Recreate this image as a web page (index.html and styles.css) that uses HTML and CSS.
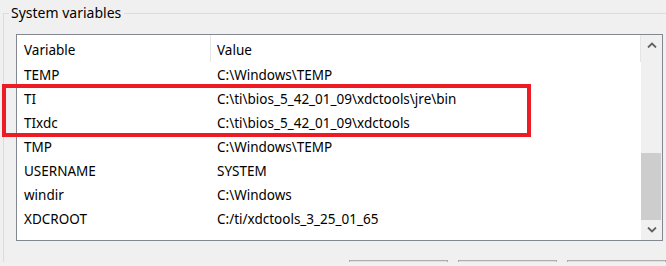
FILE: index.html
```html
<!DOCTYPE html>
<html>
<head>
<meta charset="utf-8">
<link rel="stylesheet" href="styles.css">
</head>
<body>
<fieldset class="group">
  <legend class="group-title">System variables</legend>
  <div class="listbox">
    <div class="list">
      <div class="row head">
        <div class="cell c1">Variable</div>
        <div class="cell c2">Value</div>
      </div>
      <div class="row"><div class="cell c1">TEMP</div><div class="cell">C:\Windows\TEMP</div></div>
      <div class="row"><div class="cell c1">TI</div><div class="cell">C:\ti\bios_5_42_01_09\xdctools\jre\bin</div></div>
      <div class="row"><div class="cell c1">TIxdc</div><div class="cell">C:\ti\bios_5_42_01_09\xdctools</div></div>
      <div class="row"><div class="cell c1">TMP</div><div class="cell">C:\Windows\TEMP</div></div>
      <div class="row"><div class="cell c1">USERNAME</div><div class="cell">SYSTEM</div></div>
      <div class="row"><div class="cell c1">windir</div><div class="cell">C:\Windows</div></div>
      <div class="row"><div class="cell c1">XDCROOT</div><div class="cell">C:/ti/xdctools_3_25_01_65</div></div>
    </div>
    <div class="scrollbar">
      <div class="arrow">
        <svg width="10" height="6" viewBox="0 0 10 6"><path d="M1 5.5 L5 1.5 L9 5.5" fill="none" stroke="#606060" stroke-width="1.8"/></svg>
      </div>
      <div class="track"><div class="thumb"></div></div>
      <div class="arrow">
        <svg width="10" height="6" viewBox="0 0 10 6"><path d="M1 0.5 L5 4.5 L9 0.5" fill="none" stroke="#606060" stroke-width="1.8"/></svg>
      </div>
    </div>
  </div>
  <div class="buttons">
    <div class="btn"></div>
    <div class="btn"></div>
    <div class="btn"></div>
  </div>
</fieldset>
<div class="highlight"></div>
</body>
</html>
```

FILE: styles.css
```css
html, body {
  margin: 0;
  padding: 0;
  background: #f0f0f0;
  overflow: hidden;
  width: 666px;
  height: 266px;
}
body {
  position: relative;
  font-family: "Noto Sans", "Open Sans", sans-serif;
  font-size: 13.5px;
  color: #000;
}
.group {
  margin: 3px 0 0 3px;
  padding: 11px 0 0 0;
  border: 1px solid #dcdcdc;
  border-right: none;
  border-bottom: none;
  width: 663px;
  height: 259px;
  box-sizing: border-box;
  overflow: hidden;
}
.group-title {
  padding: 0 3px 0 2px;
  margin-left: 5px;
  line-height: 20px;
  font-size: 14px;
}
.listbox {
  margin-left: 12px;
  width: 647px;
  height: 207px;
  box-sizing: border-box;
  border: 1px solid #828790;
  background: #fff;
  display: flex;
}
.list {
  flex: 1;
  display: flex;
  flex-direction: column;
}
.row {
  display: grid;
  grid-template-columns: 194px 1fr;
  height: 24px;
}
.row.head {
  height: 27px;
}
.cell {
  padding: 2px 0 0 7px;
  white-space: nowrap;
  line-height: 22px;
}
.row .cell + .cell {
  padding-left: 6px;
}
.head .cell {
  padding-top: 3px;
  line-height: 24px;
}
.head .c1, .head .c2 {
  border-right: 1px solid #e5e5e5;
}
.scrollbar {
  width: 21px;
  background: #f0f0f0;
  display: flex;
  flex-direction: column;
}
.arrow {
  height: 20px;
  display: flex;
  align-items: center;
  justify-content: center;
}
.track {
  flex: 1;
  display: flex;
  flex-direction: column;
  justify-content: flex-end;
}
.thumb {
  height: 67px;
  background: #cdcdcd;
  margin: 0 1px 0 0;
}
.buttons {
  display: flex;
  gap: 10px;
  margin-top: 19px;
  padding-left: 345px;
}
.btn {
  flex: none;
  width: 97px;
  height: 24px;
  border: 1px solid #adadad;
  background: #e1e1e1;
}
.highlight {
  position: absolute;
  left: 2px;
  top: 84px;
  width: 529px;
  height: 53px;
  box-sizing: border-box;
  border: 4px solid #ed1c24;
}
```
